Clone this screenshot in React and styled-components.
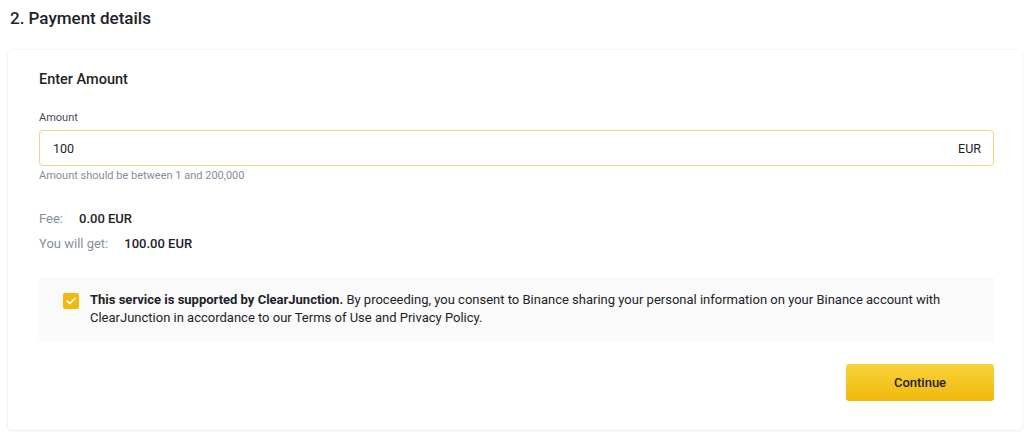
import React from "react";
import styled, { createGlobalStyle } from "styled-components";

const Global = createGlobalStyle`
  html, body { margin: 0; padding: 0; background: #fff; }
  body { font-family: Roboto, "Liberation Sans", Arial, sans-serif; color: #1E2329; }
  * { box-sizing: border-box; }
`;

const Page = styled.div`
  width: 1024px;
  height: 439px;
  overflow: hidden;
  background: #fff;
`;

const PageTitle = styled.h2`
  margin: 0;
  padding: 8px 10px;
  font-size: 17px;
  line-height: 20px;
  font-weight: 500;
  color: #1E2329;
`;

const Card = styled.section`
  margin: 14px 2px 0 8px;
  padding: 20px 28px 29px 31px;
  background: #fff;
  border-radius: 4px;
  box-shadow: 0 0 3px rgba(0, 0, 0, 0.08), 0 1px 3px rgba(0, 0, 0, 0.06);
  display: flex;
  flex-direction: column;
`;

const SectionTitle = styled.h3`
  margin: 0;
  font-size: 14.5px;
  line-height: 20px;
  font-weight: 500;
  color: #1E2329;
`;

const FieldLabel = styled.label`
  margin-top: 20px;
  font-size: 11px;
  line-height: 16px;
  color: #474D57;
`;

const InputBox = styled.div`
  margin-top: 4px;
  height: 36px;
  display: flex;
  align-items: center;
  justify-content: space-between;
  padding: 0 12px 0 13px;
  border: 1px solid #F2D67E;
  border-radius: 4px;
  font-size: 12.5px;
  color: #1E2329;
`;

const Helper = styled.div`
  margin-top: 3px;
  font-size: 11px;
  line-height: 14px;
  color: #848E9C;
`;

const InfoRow = styled.div`
  display: flex;
  gap: 16px;
  font-size: 13px;
  line-height: 16px;
  margin-top: ${(p) => p.$gap}px;
`;

const InfoLabel = styled.span`
  color: #848E9C;
`;

const InfoValue = styled.span`
  color: #1E2329;
  font-weight: 500;
`;

const Notice = styled.div`
  margin-top: 25px;
  height: 65px;
  background: #FAFAFA;
  border-radius: 2px;
  padding: 14px 24px 0 24px;
  display: flex;
  gap: 11px;
  align-items: flex-start;
`;

const Check = styled.span`
  flex: none;
  width: 16px;
  height: 16px;
  margin-top: 2px;
  border-radius: 2px;
  background: #F0B90B;
  display: flex;
  align-items: center;
  justify-content: center;
`;

const NoticeText = styled.p`
  margin: 0;
  font-size: 13px;
  line-height: 18px;
  color: #1E2329;
  b { font-weight: 700; }
`;

const Actions = styled.div`
  margin-top: 22px;
  display: flex;
  justify-content: flex-end;
`;

const Button = styled.button`
  width: 148px;
  height: 37px;
  border: none;
  border-radius: 3px;
  background: linear-gradient(180deg, #F8D33A 0%, #F0B90B 100%);
  font-family: inherit;
  font-size: 13px;
  font-weight: 500;
  color: #1E2329;
  cursor: pointer;
`;

export default function App() {
  return (
    <Page>
      <Global />
      <PageTitle>2. Payment details</PageTitle>
      <Card>
        <SectionTitle>Enter Amount</SectionTitle>
        <FieldLabel>Amount</FieldLabel>
        <InputBox>
          <span>100</span>
          <span>EUR</span>
        </InputBox>
        <Helper>Amount should be between 1 and 200,000</Helper>
        <InfoRow $gap={28}>
          <InfoLabel>Fee:</InfoLabel>
          <InfoValue>0.00 EUR</InfoValue>
        </InfoRow>
        <InfoRow $gap={9}>
          <InfoLabel>You will get:</InfoLabel>
          <InfoValue>100.00 EUR</InfoValue>
        </InfoRow>
        <Notice>
          <Check>
            <svg width="10" height="8" viewBox="0 0 10 8" fill="none">
              <path d="M1 4l2.8 2.6L9 1.2" stroke="#fff" strokeWidth="1.6" strokeLinecap="round" strokeLinejoin="round" />
            </svg>
          </Check>
          <NoticeText>
            <b>This service is supported by ClearJunction.</b> By proceeding, you consent to Binance sharing your personal information on your Binance account with ClearJunction in accordance to our Terms of Use and Privacy Policy.
          </NoticeText>
        </Notice>
        <Actions>
          <Button>Continue</Button>
        </Actions>
      </Card>
    </Page>
  );
}
